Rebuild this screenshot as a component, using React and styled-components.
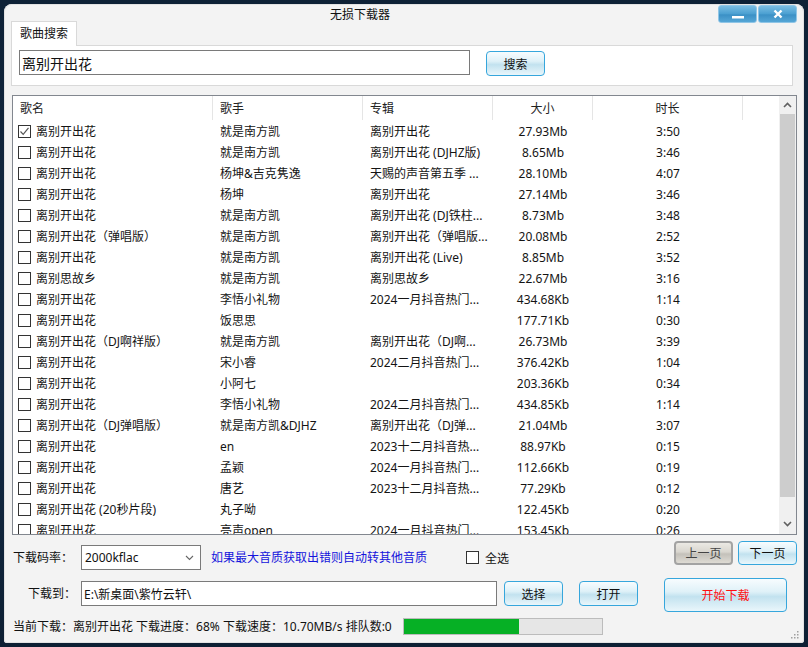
import React from "react";
import styled, { createGlobalStyle, css } from "styled-components";

const FONT = `"Noto Sans", "Noto Sans CJK SC", sans-serif`;

const Global = createGlobalStyle`
  html, body { margin: 0; padding: 0; background: #0f2339; }
  body { font-family: ${FONT}; font-size: 12px; color: #111; }
  * { box-sizing: border-box; }
`;

const Page = styled.div`
  width: 808px;
  height: 647px;
  padding: 4px;
  background: linear-gradient(180deg, #0e2136 0%, #132a44 60%, #0d1f33 100%);
`;

const Window = styled.div`
  position: relative;
  width: 800px;
  height: 639px;
  background: #f3f3f3;
  border-radius: 8px 8px 3px 3px;
  padding: 0 7px;
  display: flex;
  flex-direction: column;
  box-shadow: inset 0 0 0 1px #e2e2e2;
`;

const TitleBar = styled.div`
  height: 17px;
  display: flex;
  align-items: flex-start;
`;

const Title = styled.div`
  margin-left: 319px;
  margin-top: 2px;
  line-height: 17px;
  font-size: 12px;
  color: #111;
`;

const WinButtons = styled.div`
  margin-left: auto;
  margin-top: 1px;
  display: flex;
  gap: 1px;
`;

const WinButton = styled.div`
  width: 39px;
  height: 18px;
  border: 1px solid #8fc5e6;
  border-radius: 3px;
  background: linear-gradient(180deg, #79bde3 0%, #4a9fd1 50%, #3b90c5 55%, #55a6d6 100%);
  display: flex;
  align-items: center;
  justify-content: center;
`;

const TabStrip = styled.div`
  display: flex;
`;

const Tab = styled.div`
  position: relative;
  z-index: 1;
  height: 25px;
  margin-bottom: -1px;
  padding: 0 8px;
  line-height: 23px;
  background: #fff;
  border: 1px solid #d9d9d9;
  border-bottom: none;
  font-size: 12px;
`;

const TabPanel = styled.div`
  width: 782px;
  height: 41px;
  background: #fff;
  border: 1px solid #d9d9d9;
  padding: 4px 7px 0;
  display: flex;
  align-items: flex-start;
`;

const TextInput = styled.div`
  width: ${(p) => p.$w}px;
  height: 25px;
  margin-top: ${(p) => p.$mt || 0}px;
  border: 1px solid #7a7a7a;
  background: #fff;
  padding: 0 2px;
  display: flex;
  align-items: center;
  font-size: ${(p) => p.$fs || 12}px;
  color: #111;
  white-space: nowrap;
  overflow: hidden;
`;

const Button = styled.div`
  width: ${(p) => p.$w || 59}px;
  height: ${(p) => p.$h || 25}px;
  margin-left: ${(p) => p.$ml || 0}px;
  margin-top: ${(p) => p.$mt || 0}px;
  flex-shrink: 0;
  display: flex;
  align-items: center;
  justify-content: center;
  font-size: 12px;
  border-radius: 4px;
  color: ${(p) => p.$color || "#111"};
  ${(p) =>
    p.$gray
      ? css`
          border: 2px solid #a3a3a3;
          background: linear-gradient(180deg, #ebe9e4 0%, #d9d6cf 45%, #c4c1ba 55%, #dedbd4 100%);
          color: #444;
        `
      : css`
          border: 1px solid #36a6dc;
          background: linear-gradient(180deg, #f7fcfe 0%, #dff1f8 40%, #c2e2ef 55%, #e9f6fb 100%);
        `}
`;

const Table = styled.div`
  margin-top: 9px;
  margin-left: 1px;
  width: 785px;
  height: 440px;
  border: 1px solid #82878f;
  background: #fff;
  display: flex;
  overflow: hidden;
`;

const TableContent = styled.div`
  flex: 1;
  overflow: hidden;
`;

const cols = "200px 150px 130px 100px 150px 1fr";

const HeaderRow = styled.div`
  display: grid;
  grid-template-columns: ${cols};
  height: 24px;
`;

const HeaderCell = styled.div`
  display: flex;
  align-items: center;
  justify-content: ${(p) => (p.$center ? "center" : "flex-start")};
  padding-left: ${(p) => (p.$center ? 0 : 7)}px;
  border-right: ${(p) => (p.$last ? "none" : "1px solid #e5e5e5")};
  font-size: 12px;
  color: #222;
`;

const Row = styled.div`
  display: grid;
  grid-template-columns: ${cols};
  height: 21px;
  padding-top: 1px;
  align-items: center;
`;

const Cell = styled.div`
  display: flex;
  align-items: center;
  justify-content: ${(p) => (p.$center ? "center" : "flex-start")};
  padding-left: ${(p) => (p.$center ? 0 : p.$first ? 5 : 7)}px;
  white-space: nowrap;
  overflow: hidden;
  font-size: 12px;
  color: #141414;
`;

const Check = styled.div`
  width: 13px;
  height: 13px;
  border: 1px solid #333;
  background: #fff;
  margin-right: 5px;
  flex-shrink: 0;
  display: flex;
  align-items: center;
  justify-content: center;
`;

const ScrollBar = styled.div`
  width: 17px;
  background: #f0f0f0;
  display: flex;
  flex-direction: column;
`;

const ScrollArrow = styled.div`
  height: ${(p) => p.$h}px;
  display: flex;
  align-items: center;
  justify-content: center;
`;

const ScrollTrack = styled.div`
  flex: 1;
`;

const Thumb = styled.div`
  height: 383px;
  margin: 0 1px;
  background: #cdcdcd;
`;

const ControlRow = styled.div`
  display: flex;
  align-items: flex-start;
  height: ${(p) => p.$h}px;
  margin-top: ${(p) => p.$mt}px;
  padding-left: 2px;
`;

const Label = styled.div`
  width: 68px;
  flex-shrink: 0;
  margin-top: ${(p) => p.$mt || 0}px;
  line-height: 25px;
  font-size: 12px;
  text-align: ${(p) => (p.$right ? "right" : "left")};
  padding-right: ${(p) => (p.$right ? 5 : 0)}px;
  color: #111;
`;

const Select = styled.div`
  width: 120px;
  height: 25px;
  margin-top: 4px;
  border: 1px solid #7a7a7a;
  background: #fff;
  display: flex;
  align-items: center;
  justify-content: space-between;
  padding: 0 6px 0 3px;
  font-size: 12px;
`;

const Link = styled.div`
  width: 255px;
  margin-left: 10px;
  margin-top: 4px;
  line-height: 25px;
  color: #1414dc;
  font-size: 12px;
  white-space: nowrap;
`;

const CheckLabel = styled.div`
  display: flex;
  align-items: center;
  margin-top: 4px;
  height: 25px;
  font-size: 12px;
  gap: 1px;
`;

const Pager = styled.div`
  margin-left: auto;
  display: flex;
  gap: 5px;
`;

const Status = styled.div`
  width: 390px;
  line-height: 17px;
  font-size: 12px;
  white-space: nowrap;
  color: #111;
`;

const Progress = styled.div`
  width: 200px;
  height: 17px;
  border: 1px solid #bcbcbc;
  background: #e6e6e6;
`;

const ProgressFill = styled.div`
  height: 100%;
  background: #06b025;
`;

const Grip = styled.svg`
  position: absolute;
  right: 5px;
  bottom: 4px;
`;

const rows = [
  ["离别开出花", "就是南方凯", "离别开出花", "27.93Mb", "3:50", true],
  ["离别开出花", "就是南方凯", "离别开出花 (DJHZ版)", "8.65Mb", "3:46"],
  ["离别开出花", "杨坤&吉克隽逸", "天赐的声音第五季 ...", "28.10Mb", "4:07"],
  ["离别开出花", "杨坤", "离别开出花", "27.14Mb", "3:46"],
  ["离别开出花", "就是南方凯", "离别开出花 (DJ铁柱...", "8.73Mb", "3:48"],
  ["离别开出花（弹唱版）", "就是南方凯", "离别开出花（弹唱版...", "20.08Mb", "2:52"],
  ["离别开出花", "就是南方凯", "离别开出花 (Live)", "8.85Mb", "3:52"],
  ["离别思故乡", "就是南方凯", "离别思故乡", "22.67Mb", "3:16"],
  ["离别开出花", "李悟小礼物", "2024一月抖音热门...", "434.68Kb", "1:14"],
  ["离别开出花", "饭思思", "", "177.71Kb", "0:30"],
  ["离别开出花（DJ啊祥版）", "就是南方凯", "离别开出花（DJ啊...", "26.73Mb", "3:39"],
  ["离别开出花", "宋小睿", "2024二月抖音热门...", "376.42Kb", "1:04"],
  ["离别开出花", "小阿七", "", "203.36Kb", "0:34"],
  ["离别开出花", "李悟小礼物", "2024二月抖音热门...", "434.85Kb", "1:14"],
  ["离别开出花（DJ弹唱版）", "就是南方凯&DJHZ", "离别开出花（DJ弹...", "21.04Mb", "3:07"],
  ["离别开出花", "en", "2023十二月抖音热...", "88.97Kb", "0:15"],
  ["离别开出花", "孟颖", "2024一月抖音热门...", "112.66Kb", "0:19"],
  ["离别开出花", "唐艺", "2023十二月抖音热...", "77.29Kb", "0:12"],
  ["离别开出花 (20秒片段)", "丸子呦", "", "122.45Kb", "0:20"],
  ["离别开出花", "亮声open", "2024一月抖音热门...", "153.45Kb", "0:26"],
];

const CheckMark = () => (
  <svg width="11" height="11" viewBox="0 0 11 11">
    <path d="M1.5 5.5 L4.2 8.3 L9.5 1.8" fill="none" stroke="#555" strokeWidth="1.2" />
  </svg>
);

const Chevron = ({ up }) => (
  <svg width="9" height="6" viewBox="0 0 9 6">
    <path
      d={up ? "M1 5 L4.5 1.5 L8 5" : "M1 1 L4.5 4.5 L8 1"}
      fill="none"
      stroke="#606060"
      strokeWidth="1.6"
    />
  </svg>
);

export default function App() {
  const progress = 58;
  return (
    <Page>
      <Global />
      <Window>
        <TitleBar>
          <Title>无损下载器</Title>
          <WinButtons>
            <WinButton>
              <svg width="12" height="12" viewBox="0 0 12 12">
                <rect x="0" y="8" width="12" height="2.5" fill="#fff" />
              </svg>
            </WinButton>
            <WinButton>
              <svg width="10" height="10" viewBox="0 0 10 10">
                <path d="M1.5 1.5 L8.5 8.5 M8.5 1.5 L1.5 8.5" stroke="#fff" strokeWidth="2.4" />
              </svg>
            </WinButton>
          </WinButtons>
        </TitleBar>

        <TabStrip>
          <Tab>歌曲搜索</Tab>
        </TabStrip>
        <TabPanel>
          <TextInput $w={451} $fs={14}>离别开出花</TextInput>
          <Button $ml={16} $mt={1}>搜索</Button>
        </TabPanel>

        <Table>
          <TableContent>
            <HeaderRow>
              <HeaderCell>歌名</HeaderCell>
              <HeaderCell>歌手</HeaderCell>
              <HeaderCell>专辑</HeaderCell>
              <HeaderCell $center>大小</HeaderCell>
              <HeaderCell $center>时长</HeaderCell>
              <HeaderCell $last />
            </HeaderRow>
            {rows.map((r, i) => (
              <Row key={i}>
                <Cell $first>
                  <Check>{r[5] && <CheckMark />}</Check>
                  {r[0]}
                </Cell>
                <Cell>{r[1]}</Cell>
                <Cell>{r[2]}</Cell>
                <Cell $center>{r[3]}</Cell>
                <Cell $center>{r[4]}</Cell>
                <Cell />
              </Row>
            ))}
          </TableContent>
          <ScrollBar>
            <ScrollArrow $h={18}>
              <Chevron up />
            </ScrollArrow>
            <ScrollTrack>
              <Thumb />
            </ScrollTrack>
            <ScrollArrow $h={20}>
              <Chevron />
            </ScrollArrow>
          </ScrollBar>
        </Table>

        <ControlRow $h={29} $mt={6}>
          <Label $mt={4}>下载码率：</Label>
          <Select>
            <span>2000kflac</span>
            <svg width="9" height="6" viewBox="0 0 9 6">
              <path d="M1 1 L4.5 4.5 L8 1" fill="none" stroke="#666" strokeWidth="1.1" />
            </svg>
          </Select>
          <Link>如果最大音质获取出错则自动转其他音质</Link>
          <CheckLabel>
            <Check />
            全选
          </CheckLabel>
          <Pager>
            <Button $gray $h={24}>上一页</Button>
            <Button $h={24}>下一页</Button>
          </Pager>
        </ControlRow>

        <ControlRow $h={34} $mt={8}>
          <Label $right $mt={3}>下载到：</Label>
          <TextInput $w={416} $mt={3}>E:\新桌面\紫竹云轩\</TextInput>
          <Button $ml={7} $mt={3}>选择</Button>
          <Button $ml={16} $mt={3}>打开</Button>
          <Button $ml={26} $w={123} $h={34} $color="#ff1010">开始下载</Button>
        </ControlRow>

        <ControlRow $h={17} $mt={6}>
          <Status>当前下载：离别开出花 下载进度：68% 下载速度：10.70MB/s 排队数:0</Status>
          <Progress>
            <ProgressFill style={{ width: `${progress}%` }} />
          </Progress>
        </ControlRow>

        <Grip width="10" height="10" viewBox="0 0 10 10">
          {[
            [8, 2], [5, 5], [8, 5], [2, 8], [5, 8], [8, 8],
          ].map(([x, y], i) => (
            <rect key={i} x={x} y={y} width="1.5" height="1.5" fill="#a0a0a0" />
          ))}
        </Grip>
      </Window>
    </Page>
  );
}
